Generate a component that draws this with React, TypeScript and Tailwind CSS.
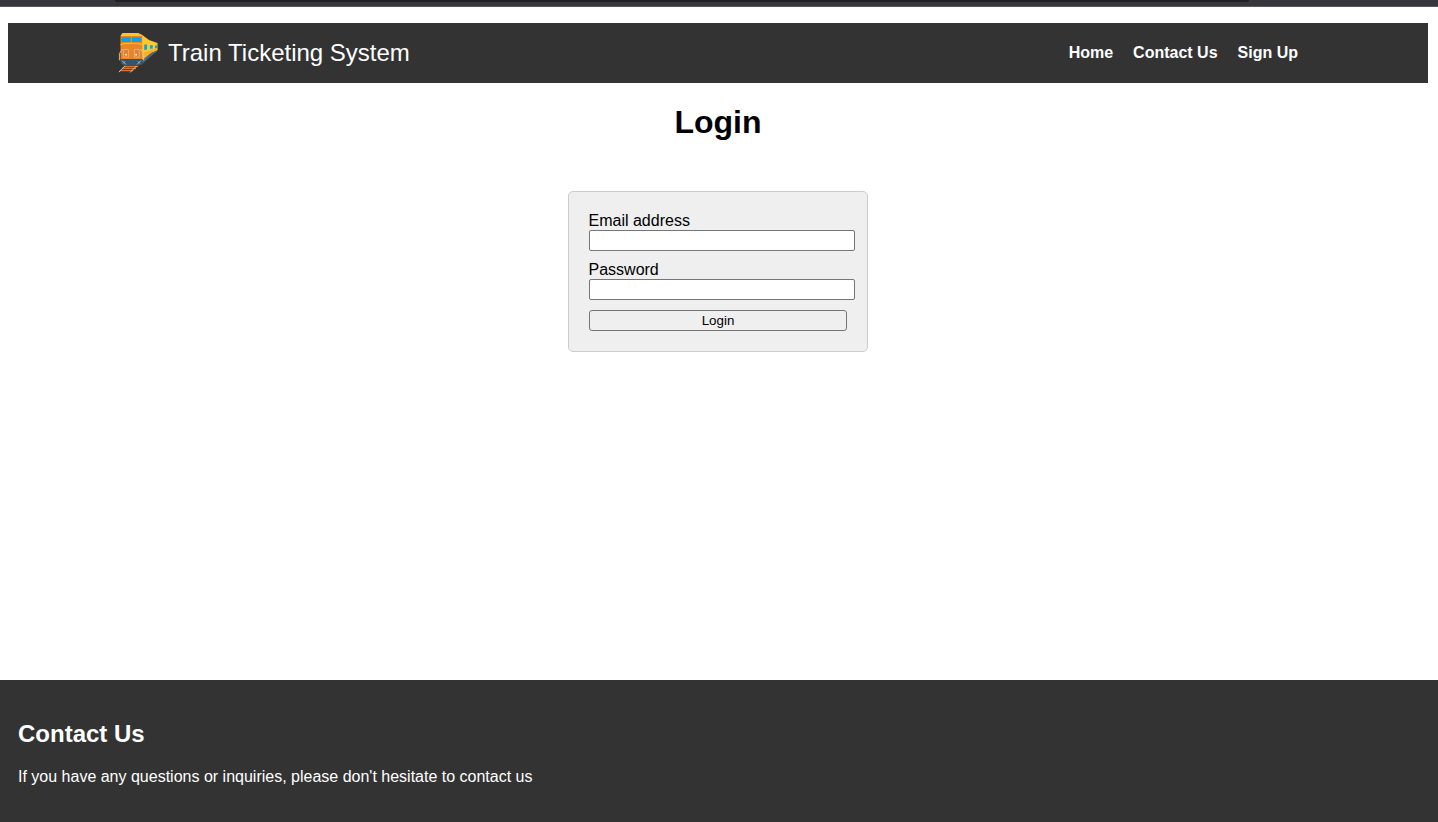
import React from "react";

function TrainLogo() {
  return (
    <svg width="40" height="40" viewBox="0 0 40 40" className="block shrink-0" aria-hidden="true">
      <path d="M6 33.500h14M4 35.500h14M1.800 37.700h13.500" stroke="#d07430" strokeWidth="1.300" />
      <path d="M.8 39.200 7.300 32.500M12 39.500l7-7" stroke="#ddd3cb" strokeWidth=".9" fill="none" />
      <path d="M24 25 39.300 16v2.200L34 22.200l-7.500 6.500L23 32z" fill="#4d687c" />
      <path d="M20 0 24 1.800 31 7l8.500 3v7L33 19.700l-9 7.300z" fill="#fdc92f" />
      <path d="M24.500 20 33 17.300l6.300-1.800v1.500L33 19.800l-8.500 6.700z" fill="#f8ae27" />
      <path d="M26.200 11.500h2.900v5l-2.900.5zM32 12.300h2.700v3.400H32zM37 12.500h2v2.700h-2z" fill="#08a5dd" />
      <path d="M4.500 0h15.500L24.200 3v24H2.500V3z" fill="#e98627" />
      <path d="M4.500 0h15.500L24 2.900H2.600z" fill="#fcc52c" />
      <path d="M2.500 11.700c3-1.800 19-1.800 21.800 0" fill="none" stroke="#fcb42c" strokeWidth="1.100" />
      <path d="M3.500 4.200h9.300V9H3.500zM14 4.200h9.300V9H14z" fill="#08a5e3" />
      <path d="M2.500 26h22v4.500L21 33H6l-3.500-3z" fill="#34556b" />
      <path d="M5.700 16.500h4.700v7.700H5.700zM16.500 16.500h4.700v7.700h-4.700z" fill="#e07e2f" stroke="#edb686" strokeWidth=".8" />
      <path d="M7.200 20.700h1.700v1.700H7.200zM17.300 20.700H19v1.700h-1.700z" fill="#f6e5d4" />
      <path d="M4.500 16 1.400 20.500v6.800M22.300 16l3.400 4.500v6.800" fill="none" stroke="#dbc7b8" strokeWidth=".9" />
      <path d="m4 27.500 4 4M23 27.500l-4 4M5 30.500l2-2M22 30.500l-2-2" fill="none" stroke="#c1cbd0" strokeWidth=".8" />
    </svg>
  );
}

function Field({ id, label, type }: { id: string; label: string; type: string }) {
  return (
    <div className="mb-[10px]">
      <label htmlFor={id} className="-ml-[0.5px] block h-[18px] leading-[18px]">{label}</label>
      <input
        id={id}
        type={type}
        className="block h-[21px] w-[266px] rounded-[2px] border border-[#767676] bg-white px-[3px] text-[13.333px] outline-none"
      />
    </div>
  );
}

export default function App() {
  return (
    <div className="flex h-[822px] w-full flex-col overflow-hidden bg-white font-['Liberation_Sans',Arial,sans-serif] text-base text-black">
      <div className="h-[7px] shrink-0 border-b border-[#5b5960] bg-[#36363c]">
        <div className="ml-[115px] h-[2px] w-[1134px] rounded-b-[2px] bg-[#202124]" />
      </div>

      <header className="ml-2 mr-[10px] mt-4 flex h-[60px] shrink-0 items-center justify-between bg-[#333333] pl-[110px] pr-[130px] text-white">
        <div className="flex items-center gap-[10px]">
          <TrainLogo />
          <span className="text-[24px] leading-[28px]">Train Ticketing System</span>
        </div>
        <nav className="flex gap-5 font-bold leading-[18px]">
          <a href="#home">Home</a>
          <a href="#contact">Contact Us</a>
          <a href="#signup">Sign Up</a>
        </nav>
      </header>

      <main className="mr-[2px] flex grow flex-col items-center">
        <h1 className="mt-[21px] text-[32px] font-bold leading-[37px]">Login</h1>
        <form
          className="mt-[50px] h-[161px] w-[300px] rounded-[5px] border border-[#cccccc] bg-[#efefef] p-5"
          onSubmit={(e) => e.preventDefault()}
        >
          <Field id="email" label="Email address" type="email" />
          <Field id="password" label="Password" type="password" />
          <button
            type="submit"
            className="block h-[21px] w-[258px] rounded-[3px] border border-[#767676] bg-[#efefef] text-center text-[13.333px] leading-[19px]"
          >
            Login
          </button>
        </form>
      </main>

      <footer id="contact" className="h-[142px] shrink-0 bg-[#333333] px-[18px] pt-[40px] text-white">
        <h2 className="text-[24px] font-bold leading-[27px]">Contact Us</h2>
        <p className="mt-[21px] leading-[18px]">If you have any questions or inquiries, please don't hesitate to contact us</p>
      </footer>
    </div>
  );
}
